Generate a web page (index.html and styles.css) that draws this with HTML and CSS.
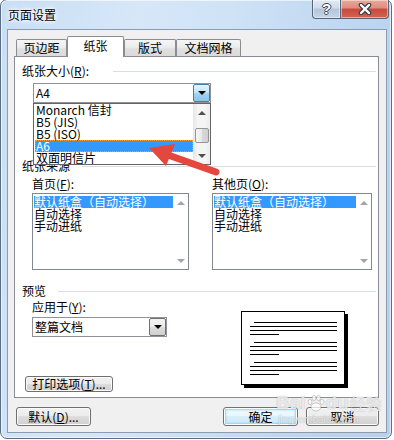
FILE: index.html
```html
<!DOCTYPE html>
<html lang="zh-CN">
<head>
    <meta charset="UTF-8">
    <meta name="viewport" content="width=device-width, initial-scale=1.0">
    <title>页面设置</title>
    <link rel="stylesheet" href="styles.css">
</head>
<body>
    <div class="window">
        <div class="titlebar">
            <span class="title">页面设置</span>
            <div class="caption-btns">
                <div class="cap-btn help"><span>?</span></div>
                <div class="cap-btn close">
                    <svg width="14" height="12" viewBox="0 0 14 12">
                        <path d="M3 2 L11 10 M11 2 L3 10" stroke="#3a3f47" stroke-width="4.6" stroke-linecap="round"/>
                        <path d="M3 2 L11 10 M11 2 L3 10" stroke="#fff" stroke-width="2.4" stroke-linecap="round"/>
                    </svg>
                </div>
            </div>
        </div>

        <div class="client">
            <div class="tabs">
                <div class="tab tab-margin">页边距</div>
                <div class="tab tab-paper active">纸张</div>
                <div class="tab tab-layout">版式</div>
                <div class="tab tab-grid">文档网格</div>
            </div>

            <div class="panel">
                <div class="group-title size-title">纸张大小(<u>R</u>):</div>
                <div class="combo size-combo">
                    <span class="combo-text">A4</span>
                    <span class="drop-btn hot"></span>

                    <div class="drop-list">
                        <div class="drop-items">
                            <div class="item">Monarch 信封</div>
                            <div class="item">B5 (JIS)</div>
                            <div class="item">B5 (ISO)</div>
                            <div class="item selected">A6</div>
                            <div class="item">双面明信片</div>
                        </div>
                        <div class="scrollbar">
                            <span class="sb-btn up"></span>
                            <span class="sb-thumb"></span>
                            <span class="sb-btn down"></span>
                        </div>
                    </div>
                </div>

                <div class="group-title source-title">纸张来源</div>
                <div class="source">
                    <div class="source-col">
                        <div class="label">首页(<u>F</u>):</div>
                        <div class="listbox">
                            <div class="list-items">
                                <div class="item selected">默认纸盒（自动选择）</div>
                                <div class="item">自动选择</div>
                                <div class="item">手动进纸</div>
                            </div>
                            <div class="scrollbar disabled">
                                <span class="sb-btn up"></span>
                                <span class="sb-btn down"></span>
                            </div>
                        </div>
                    </div>
                    <div class="source-col other">
                        <div class="label">其他页(<u>O</u>):</div>
                        <div class="listbox">
                            <div class="list-items">
                                <div class="item selected">默认纸盒（自动选择）</div>
                                <div class="item">自动选择</div>
                                <div class="item">手动进纸</div>
                            </div>
                            <div class="scrollbar disabled">
                                <span class="sb-btn up"></span>
                                <span class="sb-btn down"></span>
                            </div>
                        </div>
                    </div>
                </div>

                <div class="group-title preview-title">预览</div>
                <div class="preview">
                    <div class="preview-left">
                        <div class="label">应用于(<u>Y</u>):</div>
                        <div class="combo apply-combo">
                            <span class="combo-text">整篇文档</span>
                            <span class="drop-btn"></span>
                        </div>
                        <button class="btn print-btn">打印选项(<u>T</u>)...</button>
                    </div>
                    <div class="preview-right">
                        <div class="page">
                            <div class="para">
                                <span class="line first"></span>
                                <span class="line"></span>
                                <span class="line"></span>
                                <span class="line short"></span>
                            </div>
                            <div class="para">
                                <span class="line first"></span>
                                <span class="line"></span>
                                <span class="line"></span>
                                <span class="line short"></span>
                            </div>
                            <div class="para">
                                <span class="line first"></span>
                                <span class="line"></span>
                                <span class="line"></span>
                                <span class="line short"></span>
                            </div>
                        </div>
                    </div>
                </div>
            </div>

            <div class="footer">
                <button class="btn btn-reset">默认(<u>D</u>)...</button>
                <button class="btn btn-ok default">确定</button>
                <button class="btn btn-cancel">取消</button>
            </div>
        </div>
    </div>

    <!-- red annotation arrow -->
    <svg class="arrow" width="394" height="440" viewBox="0 0 394 440">
        <line x1="168" y1="155" x2="216" y2="172" stroke="#e4473d" stroke-width="7" stroke-linecap="round"/>
        <polygon points="149,148 175,144 166,166" fill="#e4473d"/>
    </svg>

    <div class="watermark">
        <span class="wm-logo">Bai<svg class="paw" width="20" height="18" viewBox="0 0 20 18">
            <ellipse cx="10" cy="13" rx="5" ry="4"/>
            <ellipse cx="4" cy="8" rx="2" ry="2.6"/>
            <ellipse cx="8" cy="4" rx="2" ry="2.6"/>
            <ellipse cx="12.5" cy="4" rx="2" ry="2.6"/>
            <ellipse cx="16" cy="8" rx="2" ry="2.6"/>
        </svg>du<span class="wm-cn">经验</span></span>
        <span class="wm-url">jingyan.baidu.com</span>
    </div>
</body>
</html>
```

FILE: styles.css
```css
* {
    margin: 0;
    padding: 0;
    box-sizing: border-box;
}

body {
    width: 394px;
    height: 440px;
    position: relative;
    overflow: hidden;
    background: #fff;
    font-family: "Noto Sans CJK SC", "Liberation Sans", sans-serif;
    font-size: 12px;
    color: #000;
}

u {
    text-decoration: underline;
    text-underline-offset: 1px;
}

/* window frame */
.window {
    width: 392px;
    height: 440px;
    margin-top: -1px;
    border: 1px solid #5a6d84;
    border-radius: 7px;
    background: linear-gradient(100deg, #c9def4 0%, #d6e7f8 30%, #cfe2f6 50%, #bcd5f0 80%, #b6d0ee 100%);
    box-shadow: inset 0 0 0 1px rgba(255, 255, 255, 0.6);
    display: flex;
    flex-direction: column;
}

.titlebar {
    height: 29px;
    display: flex;
    justify-content: space-between;
    align-items: flex-start;
    padding-left: 7px;
}

.title {
    margin-top: 7px;
    line-height: 16px;
    text-shadow: 0 0 6px #fff, 0 0 4px #fff, 0 0 2px #fff;
}

.caption-btns {
    display: flex;
    margin-right: 2px;
}

.cap-btn {
    height: 19px;
    border: 1px solid #56657a;
    border-top: none;
    display: flex;
    align-items: center;
    justify-content: center;
    box-shadow: inset 0 0 0 1px rgba(255, 255, 255, 0.45);
}

.help {
    width: 28px;
    border-right: none;
    border-radius: 0 0 0 4px;
    background: linear-gradient(#e2eaf3, #d0dbe8 45%, #b6c6d9 50%, #c5d5e7);
}

.help span {
    font-family: "Liberation Sans", sans-serif;
    font-weight: bold;
    font-size: 15px;
    line-height: 16px;
    color: #fff;
    text-shadow: 1px 0 0 #3d4756, -1px 0 0 #3d4756, 0 1px 0 #3d4756, 0 -1px 0 #3d4756;
}

.close {
    width: 49px;
    border-radius: 0 0 4px 0;
    background: linear-gradient(#eaa899, #dc8e7e 45%, #c8493c 50%, #d36452);
}

/* client area */
.client {
    height: 404px;
    margin: 0 4px 0 6px;
    border: 1px solid #8a9cb2;
    background: #f0f0f0;
    padding: 6px 7px 6px 6px;
    display: flex;
    flex-direction: column;
}

.tabs {
    display: flex;
    align-items: flex-end;
    height: 21px;
    margin-left: 2px;
    margin-bottom: -1px;
    position: relative;
    z-index: 1;
}

.tab {
    height: 17px;
    margin-bottom: 1px;
    border: 1px solid #898c95;
    border-bottom: none;
    border-radius: 2px 2px 0 0;
    background: linear-gradient(#f5f5f5, #ececec 45%, #e0e0e0 55%, #dadada);
    line-height: 15px;
    text-align: center;
}

.tab-margin { width: 51px; }
.tab-paper { width: 57px; }
.tab-layout { width: 52px; }
.tab-grid { width: 65px; }

.tab.active {
    height: 21px;
    margin-bottom: 0;
    background: #fff;
    line-height: 18px;
}

.panel {
    height: 342px;
    border: 1px solid #898c95;
    background: #fff;
    padding: 7px 2px 0 7px;
}

.group-title {
    display: flex;
    align-items: center;
    height: 14px;
    line-height: 14px;
}

.group-title::after {
    content: "";
    flex: 1;
    height: 1px;
    background: #d5dfe5;
    margin-left: 12px;
}

.size-title::after {
    margin-left: 24px;
}

.source-title {
    margin-top: 56px;
}

.preview-title {
    margin-top: 14px;
}

.label {
    height: 14px;
    line-height: 14px;
}

/* combo boxes */
.combo {
    position: relative;
    height: 20px;
    border: 1px solid #8f9398;
    background: #fff;
    display: flex;
    align-items: center;
}

.combo-text {
    flex: 1;
    padding-left: 2px;
    line-height: 16px;
}

.drop-btn {
    width: 17px;
    height: 18px;
    border: 1px solid #707070;
    border-radius: 2px;
    background: linear-gradient(#f2f2f2, #ebebeb 50%, #dddddd 50%, #cfcfcf);
    display: flex;
    align-items: center;
    justify-content: center;
}

.drop-btn::after {
    content: "";
    border-left: 4px solid transparent;
    border-right: 4px solid transparent;
    border-top: 4px solid #000;
}

.drop-btn.hot {
    border-color: #3c7fb1;
    background: linear-gradient(#e3f4fc, #c4e6f7 45%, #9fd3f0 55%, #88c6ea);
}

.size-combo {
    width: 178px;
    margin: 5px 0 0 11px;
}

.apply-combo {
    width: 135px;
    margin-top: 3px;
}

/* opened drop-down list */
.drop-list {
    position: absolute;
    top: calc(100% + 1px);
    left: -1px;
    width: 178px;
    height: 62px;
    border: 1px solid #646464;
    background: #fff;
    display: flex;
    overflow: hidden;
    z-index: 2;
}

.drop-items {
    flex: 1;
    padding-left: 1px;
}

.item {
    height: 12px;
    line-height: 12px;
    white-space: nowrap;
}

.item.selected {
    background: #3399ff;
    color: #fff;
}

.drop-items .item {
    padding-left: 1px;
}

.drop-items .item.selected {
    outline: 1px dotted #f29a2e;
    outline-offset: -1px;
}

.scrollbar {
    width: 17px;
    display: flex;
    flex-direction: column;
    align-items: center;
    background: linear-gradient(to right, #e6e6e6, #f5f5f5 30%, #f5f5f5 70%, #ececec);
}

.sb-btn {
    width: 100%;
    height: 17px;
    display: flex;
    align-items: center;
    justify-content: center;
}

.sb-btn.up::after {
    content: "";
    border-left: 4px solid transparent;
    border-right: 4px solid transparent;
    border-bottom: 4px solid #505050;
}

.sb-btn.down {
    margin-top: auto;
}

.sb-btn.down::after {
    content: "";
    border-left: 4px solid transparent;
    border-right: 4px solid transparent;
    border-top: 4px solid #505050;
}

.sb-thumb {
    width: 14px;
    height: 15px;
    margin-top: 7px;
    border: 1px solid #959595;
    border-radius: 2px;
    background: linear-gradient(to right, #f5f5f5, #e9e9e9 50%, #d9d9d9 50%, #d0d0d0);
}

.scrollbar.disabled {
    width: 15px;
    background: #fff;
}

.scrollbar.disabled .sb-btn.up::after {
    border-bottom-color: #a3a3a3;
}

.scrollbar.disabled .sb-btn.down::after {
    border-top-color: #a3a3a3;
}

/* paper source */
.source {
    display: flex;
    gap: 23px;
    margin: 4px 0 0 10px;
}

.source-col {
    width: 157px;
}

.source-col.other {
    width: 160px;
}

.listbox {
    height: 77px;
    margin-top: 2px;
    border: 1px solid #828790;
    background: #fff;
    display: flex;
}

.list-items {
    flex: 1;
    padding: 2px 0 0 1px;
}

/* preview */
.preview {
    display: flex;
    gap: 23px;
    margin-left: 10px;
}

.preview-left {
    width: 157px;
    padding-top: 2px;
    display: flex;
    flex-direction: column;
    align-items: flex-start;
}

.preview-right {
    width: 160px;
}

.page {
    width: 104px;
    height: 74px;
    margin: 13px 0 0 29px;
    border: 1px solid #000;
    box-shadow: 3px 3px 0 #000;
    background: #fff;
    padding: 10px 0 0 8px;
    display: flex;
    flex-direction: column;
    gap: 7px;
}

.para {
    display: flex;
    flex-direction: column;
    gap: 3px;
}

.line {
    display: block;
    width: 87px;
    height: 1px;
    background: #000;
}

.line.first {
    width: 83px;
    margin-left: 4px;
}

.line.short {
    width: 29px;
}

/* buttons */
.btn {
    height: 19px;
    border: 1px solid #707070;
    border-radius: 3px;
    background: linear-gradient(#f2f2f2, #ebebeb 50%, #dddddd 50%, #cfcfcf);
    box-shadow: inset 0 0 0 1px #fbfbfb;
    font-family: inherit;
    font-size: 12px;
    line-height: 15px;
    color: #000;
}

.print-btn {
    width: 88px;
    height: 16px;
    line-height: 12px;
    margin: 39px 0 0 -7px;
}

.footer {
    display: flex;
    margin: 9px 0 0 2px;
}

.btn-reset { width: 75px; }
.btn-ok { width: 75px; margin-left: auto; }
.btn-cancel { width: 73px; margin-left: 8px; }

.btn.default {
    border-color: #3c7fb1;
    background: linear-gradient(#f4fafe, #e9f5fc 50%, #d8eefa 50%, #cde9f8);
    box-shadow: inset 0 0 0 1px #fff, inset 0 0 2px 2px #8fd3f5;
}

/* overlays */
.arrow {
    position: absolute;
    left: 0;
    top: 0;
    z-index: 5;
    pointer-events: none;
}

.watermark {
    position: absolute;
    left: 276px;
    top: 392px;
    z-index: 5;
    display: flex;
    flex-direction: column;
    pointer-events: none;
    color: rgba(255, 255, 255, 0.75);
    text-shadow: 0 0 1px rgba(110, 110, 110, 0.6);
}

.wm-logo {
    display: flex;
    align-items: center;
    font-family: "Liberation Sans", sans-serif;
    font-weight: bold;
    font-size: 19px;
    line-height: 22px;
}

.paw {
    fill: rgba(255, 255, 255, 0.75);
    stroke: rgba(120, 120, 120, 0.45);
    stroke-width: 0.8;
}

.wm-cn {
    font-family: "Noto Sans CJK SC", sans-serif;
    font-size: 16px;
    font-weight: normal;
    margin-left: 1px;
}

.wm-url {
    font-family: "Liberation Sans", sans-serif;
    font-size: 10px;
    line-height: 11px;
    margin-left: 2px;
}
```
